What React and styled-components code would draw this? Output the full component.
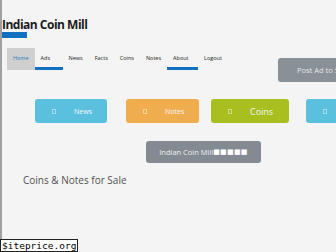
import React from 'react';
import styled, { createGlobalStyle } from 'styled-components';

const GlobalStyle = createGlobalStyle`
  html, body {
    margin:0;
    padding:0;
    background:#f4f4f4;
  }
  body {
    font-family:"Open Sans", "Liberation Sans", sans-serif;
  }
`;

const StPage = styled.div`
  width:336px;
  height:252px;
  box-sizing:border-box;
  border-left:2px solid #a0a0a0;
  background:#f4f4f4;
  overflow:hidden;
`;

const StTitle = styled.h1`
  margin:0;
  padding-top:17px;
  font-size:12px;
  line-height:15px;
  font-weight:700;
  color:#1b1b1b;
  letter-spacing:-0.5px;
`;

const StTitleBar = styled.div`
  width:27px;
  height:6px;
  margin-left:-2px;
  background:#1170bf;
`;

const StNavRow = styled.div`
  display:flex;
  align-items:flex-start;
  margin-top:10px;
`;

const StNav = styled.ul`
  display:flex;
  list-style:none;
  margin:0;
  padding:0 0 0 5px;
`;

const StNavItem = styled.li`
  box-sizing:border-box;
  min-width:${props => props.$w || 25}px;
  height:22px;
  padding:0 6px;
  display:flex;
  align-items:center;
  justify-content:${props => (props.$active ? 'center' : 'flex-start')};
  font-size:5.5px;
  color:${props => (props.$active ? '#2a7bc0' : '#222')};
  background:${props => (props.$active ? '#cfcfcf' : 'transparent')};
  border-bottom:3px solid;
  border-bottom-color:${props => (props.$active ? '#cfcfcf' : props.$marked ? '#1170bf' : 'transparent')};
`;

const StPostButton = styled.button`
  flex-shrink:0;
  width:95px;
  height:24px;
  margin-top:10px;
  margin-left:auto;
  margin-right:-37px;
  border:none;
  border-radius:3px;
  background:#8a9097;
  color:#e4e6e8;
  font-family:inherit;
  font-size:7.5px;
  text-align:left;
  padding:0 0 0 19px;
`;

const StTiles = styled.div`
  display:flex;
  margin-top:17px;
`;

const StTile = styled.div`
  flex-shrink:0;
  box-sizing:border-box;
  width:${props => props.$w}px;
  height:24px;
  margin-left:${props => props.$ml}px;
  border-radius:3px;
  background:${props => props.$bg};
  display:flex;
  align-items:center;
  padding-left:17px;
  color:#f3f8fa;
  font-size:${props => props.$fs || 7}px;
`;

const StTileIcon = styled.span`
  width:2px;
  height:3px;
  border:1px solid rgba(255,255,255,0.45);
  margin-right:18px;
`;

const StMillButton = styled.button`
  display:flex;
  align-items:center;
  justify-content:center;
  width:115px;
  height:22px;
  margin:18px 0 0 144px;
  border:none;
  border-radius:3px;
  background:#838a91;
  color:#eef0f1;
  font-family:inherit;
  font-size:7.5px;
  padding:0;
`;

const StBoxes = styled.span`
  font-family:"DejaVu Sans", sans-serif;
  font-size:7px;
  letter-spacing:0.3px;
  color:#fff;
`;

const StHeading = styled.h2`
  margin:10px 0 0 21px;
  font-size:10px;
  line-height:14px;
  font-weight:400;
  color:#505050;
`;

const StBadge = styled.div`
  position:fixed;
  left:0;
  bottom:0;
  padding:0 1px;
  background:#fff;
  border:1px solid #222;
  font-family:"DejaVu Sans Mono", monospace;
  font-size:9.5px;
  line-height:11px;
  color:#000;
`;

const navItems = [
  { label: 'Home', active: true, w: 26 },
  { label: 'Ads', marked: true, w: 28 },
  { label: 'News', w: 25 },
  { label: 'Facts', w: 25 },
  { label: 'Coins', w: 25 },
  { label: 'Notes', w: 27 },
  { label: 'About', marked: true, w: 31 },
  { label: 'Logout', w: 28 }
];

const tiles = [
  { label: 'News', bg: '#5bc0de', w: 72, ml: 33 },
  { label: 'Notes', bg: '#f0ad4e', w: 73, ml: 19 },
  { label: 'Coins', bg: '#a8bf1f', w: 78, ml: 12, fs: 9 },
  { label: '', bg: '#5bc0de', w: 80, ml: 17 }
];

export default function App() {
  return (
    <StPage>
      <GlobalStyle />
      <StTitle>Indian Coin Mill</StTitle>
      <StTitleBar />
      <StNavRow>
        <StNav>
          {navItems.map(item => (
            <StNavItem
              key={item.label}
              $active={item.active}
              $marked={item.marked}
              $w={item.w}
            >
              {item.label}
            </StNavItem>
          ))}
        </StNav>
        <StPostButton>Post Ad to Sell</StPostButton>
      </StNavRow>
      <StTiles>
        {tiles.map((t, i) => (
          <StTile key={i} $bg={t.bg} $w={t.w} $ml={t.ml} $fs={t.fs}>
            <StTileIcon />
            {t.label}
          </StTile>
        ))}
      </StTiles>
      <StMillButton>
        Indian Coin Mill<StBoxes>■■■■■</StBoxes>
      </StMillButton>
      <StHeading>Coins &amp; Notes for Sale</StHeading>
      <StBadge>$iteprice.org</StBadge>
    </StPage>
  );
}
